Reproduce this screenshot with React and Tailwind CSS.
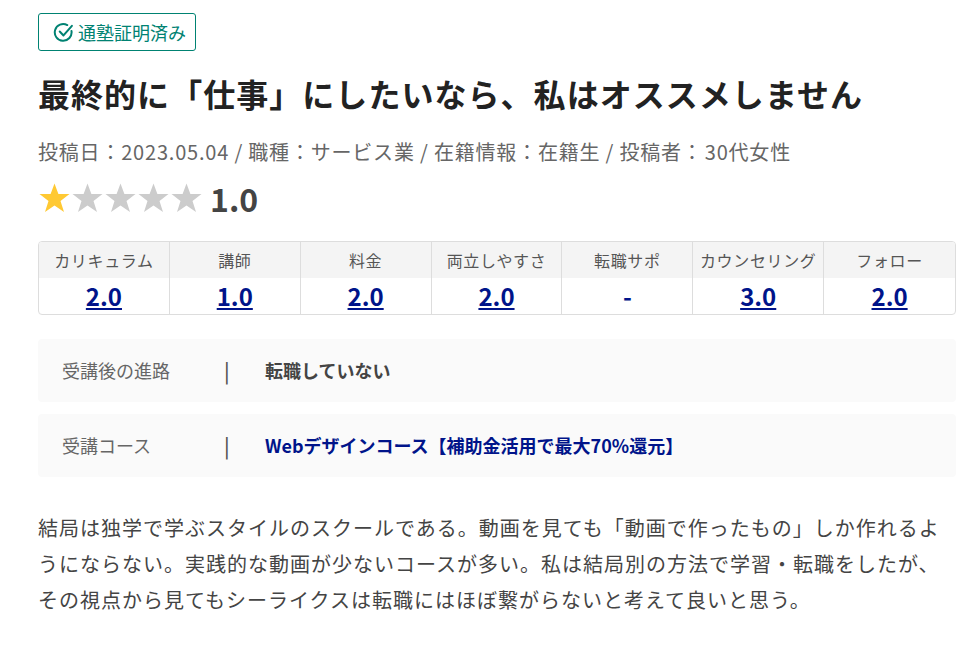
const F = { fontFamily: '"Noto Sans CJK JP", "Noto Sans", sans-serif' };

const scores = [
  ['カリキュラム', '2.0'],
  ['講師', '1.0'],
  ['料金', '2.0'],
  ['両立しやすさ', '2.0'],
  ['転職サポ', '-'],
  ['カウンセリング', '3.0'],
  ['フォロー', '2.0'],
];

function Star({ on }) {
  return (
    <svg width="33" height="32" viewBox="0 0 33 32" className="shrink-0">
      <path d="M16.5 1.5 L20.4 12 L31.5 12 L22.5 19 L26 30 L16.5 23.5 L7 30 L10.5 19 L1.5 12 L12.6 12 Z" fill={on ? '#ffc933' : '#cccccc'} />
    </svg>
  );
}

function Row({ label, children }) {
  return (
    <div className="flex items-center h-[63px] rounded bg-[#fafafa] pl-6">
      <span className="w-[162px] text-[18px] text-[#666666]">{label}</span>
      <span className="w-[41px] text-[20px] font-medium text-[#555555]">|</span>
      {children}
    </div>
  );
}

export default function App() {
  return (
    <div style={F} className="w-[978px] h-[651px] bg-white pl-[38px] pr-[22px] pt-[13px] overflow-hidden text-[#444444]">
      <div className="inline-flex items-center h-[38px] w-[158px] pl-[14px] gap-[4px] border border-[#008272] rounded-[3px] text-[#008272] text-[18px]">
        <svg width="21" height="21" viewBox="0 0 20 20" fill="none" stroke="#008272" strokeWidth="1.9" strokeLinecap="round" strokeLinejoin="round">
          <path d="M17.6 8.6 A8 8 0 1 1 13.6 2.9" />
          <path d="M6.4 9 L10 12.8 L18 3.6" />
        </svg>
        <span>通塾証明済み</span>
      </div>
      <h1 className="mt-[14px] text-[32px] leading-[56px] font-bold text-[#222222] tracking-[1.04px] whitespace-nowrap">
        最終的に「仕事」にしたいなら、私はオススメしません
      </h1>
      <p className="mt-[17px] text-[20px] leading-[28px] text-[#666666] tracking-[0.8px] whitespace-nowrap">
        投稿日：2023.05.04 / 職種：サービス業 / 在籍情報：在籍生 / 投稿者：<span className="ml-[2px]">30代女性</span>
      </p>
      <div className="mt-[11px] flex items-center h-[42px]">
        <Star on />
        <Star />
        <Star />
        <Star />
        <Star />
        <span className="ml-[7px] text-[32px] font-bold text-[#444444]">1.0</span>
      </div>
      <div className="mt-[22px] grid grid-cols-7 border border-[#dddddd] rounded h-[74px] overflow-hidden">
        {scores.map(([k, v], i) => (
          <div key={k} className={'flex flex-col ' + (i < 6 ? 'border-r border-[#dddddd]' : '')}>
            <div className="h-[36px] flex items-center justify-center bg-[#f4f4f4] text-[16px] text-[#555555] tracking-[0.04em] whitespace-nowrap">{k}</div>
            <div className="flex-1 flex items-center justify-center text-[24px] font-bold leading-none">
              {v === '-' ? <span className="text-[#00148a]">-</span> : <a className="text-[#00148a] underline">{v}</a>}
            </div>
          </div>
        ))}
      </div>
      <div className="mt-[24px] flex flex-col gap-[12px]">
        <Row label="受講後の進路"><span className="text-[18px] font-bold text-[#444444]">転職していない</span></Row>
        <Row label="受講コース"><span className="text-[18px] font-bold text-[#00148a]">Webデザインコース【補助金活用で最大70%還元】</span></Row>
      </div>
      <p className="mt-[33px] text-[20px] leading-[36px] text-[#444444] tracking-[1px]">
        結局は独学で学ぶスタイルのスクールである。動画を見ても「動画で作ったもの」しか作れるようにならない。実践的な動画が少ないコースが多い。私は結局別の方法で学習・転職をしたが、その視点から見てもシーライクスは転職にはほぼ繋がらないと考えて良いと思う。
      </p>
    </div>
  );
}
